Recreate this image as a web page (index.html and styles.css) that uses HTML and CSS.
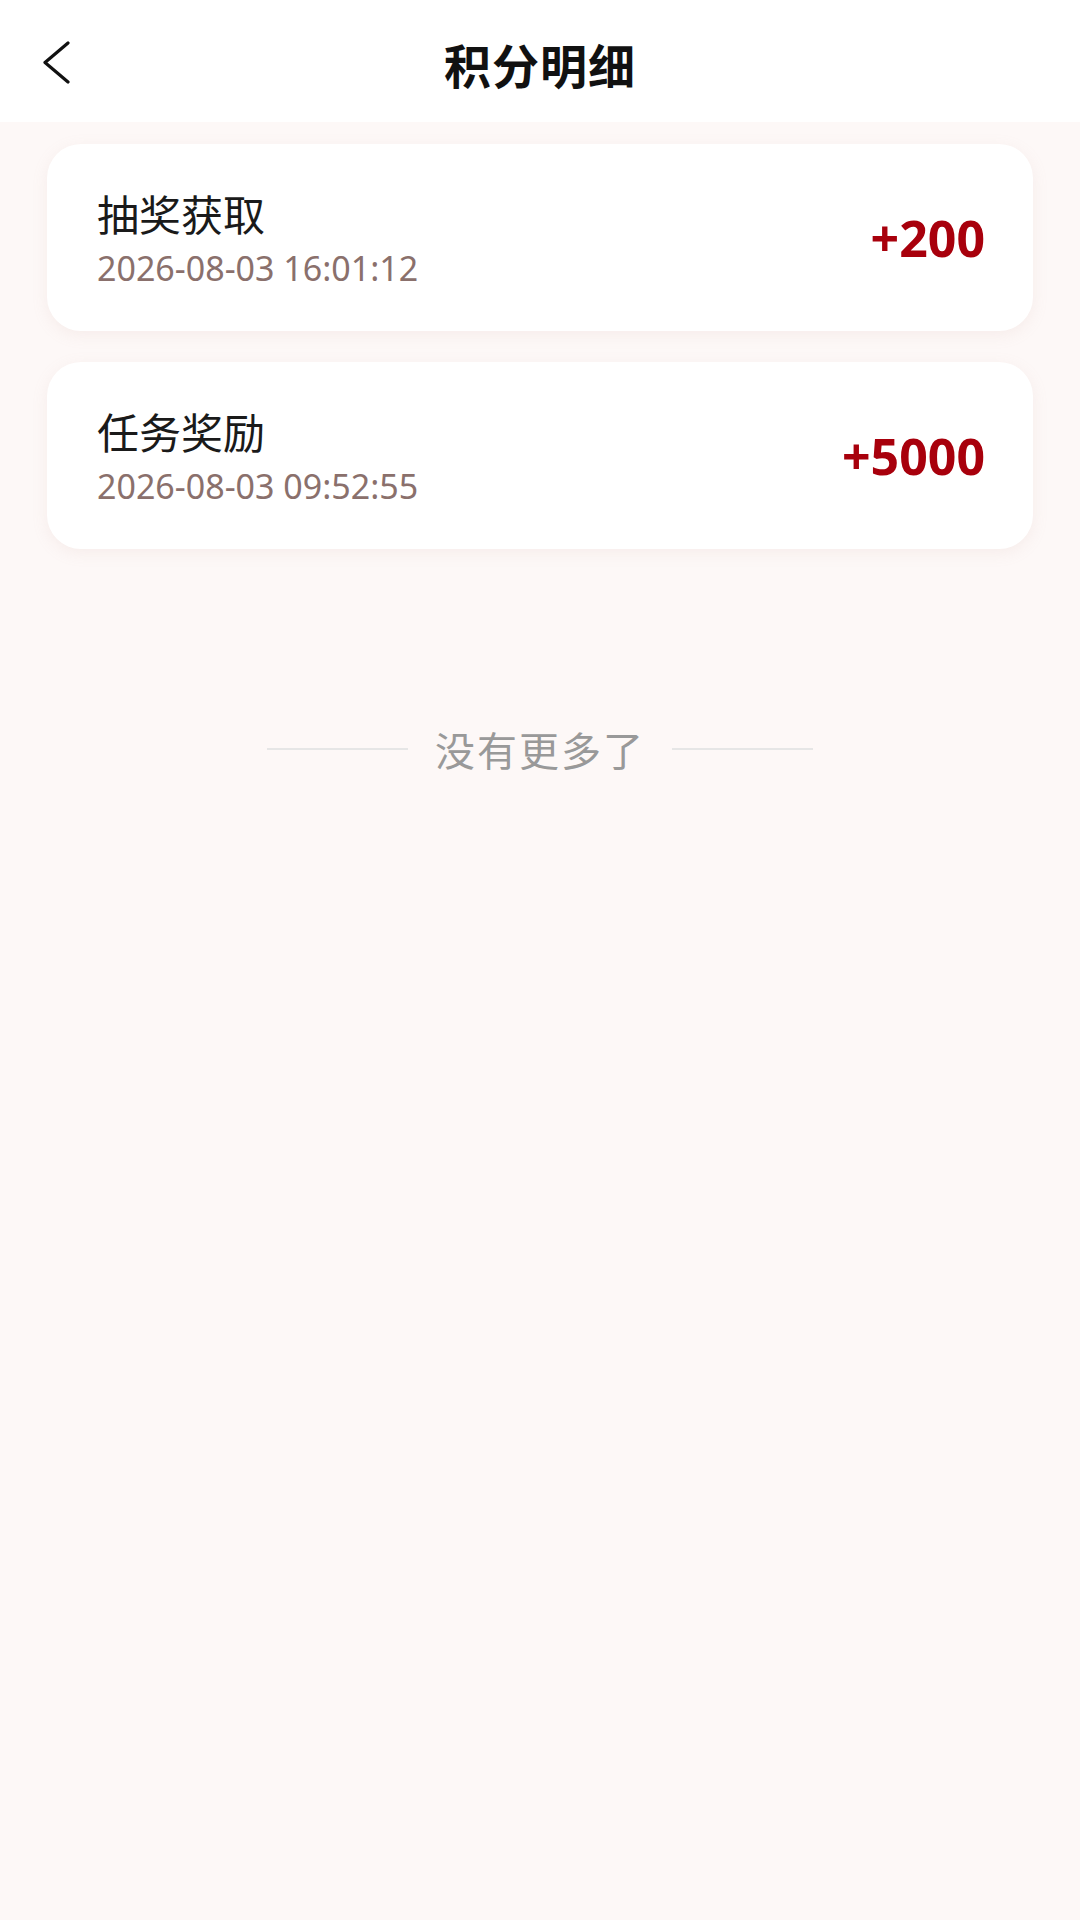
FILE: index.html
```html
<!DOCTYPE html>
<html lang="zh-CN">
<head>
    <meta charset="UTF-8">
    <meta name="viewport" content="width=device-width, initial-scale=1.0">
    <title>积分明细</title>
    <link rel="stylesheet" href="styles.css">
</head>
<body>
<div class="page">
    <!-- Top bar -->
    <div class="nav-bar">
        <div class="nav-left">
            <svg class="back-icon" width="30" height="44" viewBox="0 0 30 44">
                <path d="M27 3 L4 22.5 L27 42" fill="none" stroke="#111" stroke-width="3.2" stroke-linecap="round" stroke-linejoin="round"/>
            </svg>
        </div>
        <div class="nav-title">积分明细</div>
        <div class="nav-right"></div>
    </div>

    <!-- Points records -->
    <div class="record-list">
        <div class="record-card">
            <div class="record-info">
                <div class="record-name">抽奖获取</div>
                <div class="record-time">2026-08-03 16:01:12</div>
            </div>
            <div class="record-points">+200</div>
        </div>
        <div class="record-card">
            <div class="record-info">
                <div class="record-name">任务奖励</div>
                <div class="record-time">2026-08-03 09:52:55</div>
            </div>
            <div class="record-points">+5000</div>
        </div>
    </div>

    <div class="no-more">
        <span class="no-more-line"></span>
        <span class="no-more-text">没有更多了</span>
        <span class="no-more-line"></span>
    </div>
</div>
</body>
</html>
```

FILE: styles.css
```css
html, body {
    margin: 0;
    padding: 0;
}
body {
    font-family: "Noto Sans CJK SC", "Noto Sans", sans-serif;
    background-color: #fdf8f7;
    width: 1080px;
    min-height: 1920px;
}
.page {
    min-height: 1920px;
    background-color: #fdf8f7;
}
.nav-bar {
    height: 122px;
    background-color: #fff;
    display: grid;
    grid-template-columns: 1fr auto 1fr;
    align-items: center;
}
.nav-left {
    padding-left: 41px;
    display: flex;
    align-items: center;
    padding-top: 2px;
}
.nav-title {
    font-size: 47px;
    font-weight: bold;
    color: #111;
    letter-spacing: 1px;
    padding-top: 4px;
}
.record-list {
    padding: 22px 47px 0;
    display: flex;
    flex-direction: column;
    gap: 31px;
}
.record-card {
    height: 187px;
    background-color: #fff;
    border-radius: 34px;
    box-shadow: 0 4px 16px rgba(200, 160, 150, 0.12);
    padding: 0 48px 0 50px;
    display: flex;
    align-items: center;
    justify-content: space-between;
}
.record-info {
    display: flex;
    flex-direction: column;
}
.record-name {
    font-size: 42px;
    line-height: 54px;
    color: #1a1a1a;
}
.record-time {
    margin-top: 6px;
    font-family: "Noto Sans", "Noto Sans CJK SC", sans-serif;
    font-size: 34px;
    line-height: 44px;
    color: #8a706c;
}
.record-points {
    font-family: "Noto Sans", "Noto Sans CJK SC", sans-serif;
    font-size: 50px;
    font-weight: bold;
    color: #a8000c;
}
.no-more {
    margin-top: 178px;
    display: flex;
    justify-content: center;
    align-items: center;
    gap: 27px;
}
.no-more-line {
    width: 141px;
    height: 2px;
    background-color: #e6e6e6;
}
.no-more-text {
    font-size: 40px;
    line-height: 44px;
    color: #999;
    letter-spacing: 2px;
}
```
